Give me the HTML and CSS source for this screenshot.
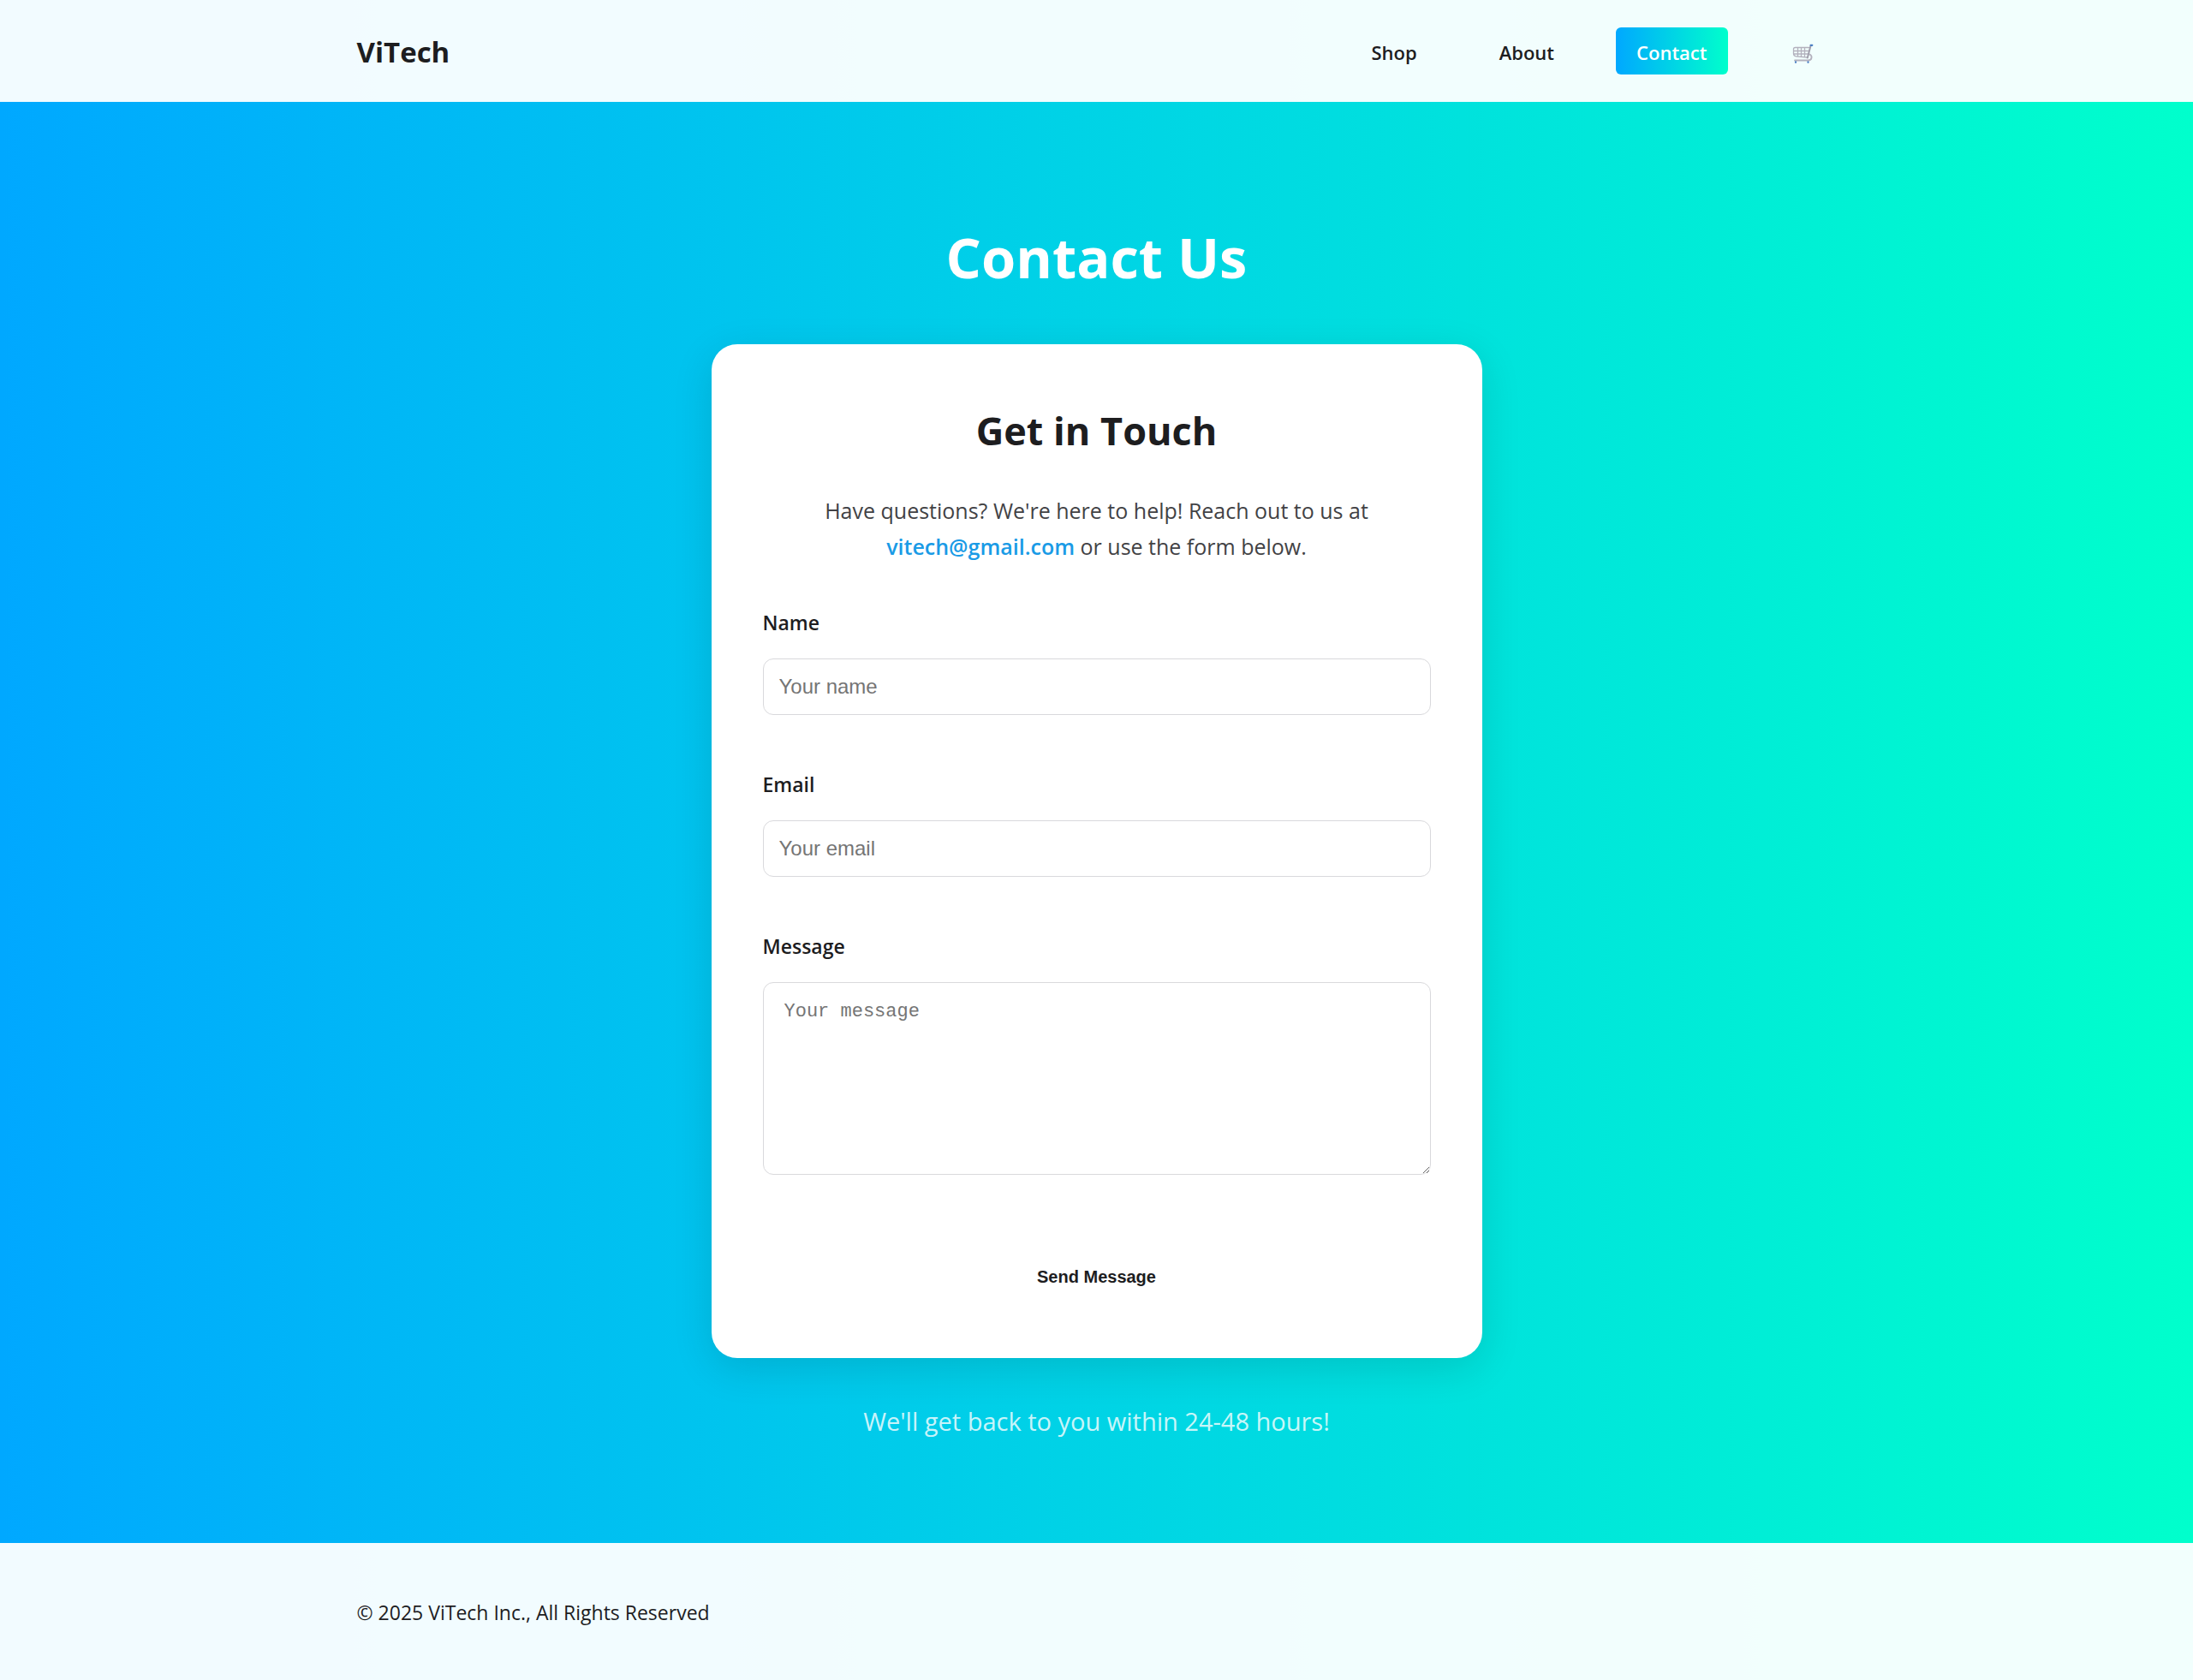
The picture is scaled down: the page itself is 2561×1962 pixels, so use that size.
FILE: index.html
```html
<!DOCTYPE html>
<html lang="en">
<head>
<meta charset="utf-8">
<meta name="viewport" content="width=device-width, initial-scale=1">
<title>Contact | ViTech</title>
<link rel="stylesheet" href="styles.css">
</head>
<body>
<header class="site-header">
  <div class="container header-inner">
    <a class="logo" href="#">ViTech</a>
    <nav class="nav">
      <a class="nav-link" href="#">Shop</a>
      <a class="nav-link" href="#">About</a>
      <a class="nav-link nav-link-active" href="#" aria-current="page">Contact</a>
      <a class="nav-link" href="#" aria-label="Cart">
        <svg class="cart-icon" viewBox="0 0 31 24" aria-hidden="true">
          <g fill="none" stroke-linecap="round" stroke-linejoin="round">
            <path d="M22.500 5.500H6.500Q4.500 5.500 4.500 7.500V12.500Q4.500 15.500 7.500 15.800L20.500 17M5 9.500H21.500M5 13H21M9.500 5.500V15.500M13.500 5.500V16M17.500 5.500V16.500" stroke="#b3b1bd" stroke-width="1.300"/>
            <path d="M24.500 3.500L20.800 17.500" stroke="#a09eac" stroke-width="2"/>
            <path d="M23.500 13.500Q26 15 25.500 17.500Q25 20.500 21.500 20.500H6" stroke="#b3b1bd" stroke-width="1.800"/>
            <path d="M24.600 2.800H26.300M7 22.300V22.800M21.500 22.300V22.800" stroke="#4c7fc4" stroke-width="2.200"/>
          </g>
        </svg>
      </a>
    </nav>
  </div>
</header>

<main class="contact">
  <h1 class="page-title">Contact Us</h1>
  <section class="card">
    <h2 class="card-title">Get in Touch</h2>
    <p class="intro">Have questions? We're here to help! Reach out to us at <a class="mail-link" href="mailto:vitech@gmail.com">vitech@gmail.com</a> or use the form below.</p>
    <form class="form">
      <div class="field">
        <label class="label" for="name">Name</label>
        <input class="control" id="name" type="text" placeholder="Your name">
      </div>
      <div class="field">
        <label class="label" for="email">Email</label>
        <input class="control" id="email" type="email" placeholder="Your email">
      </div>
      <div class="field">
        <label class="label" for="message">Message</label>
        <textarea class="control control-area" id="message" placeholder="Your message"></textarea>
      </div>
      <button class="send" type="submit">Send Message</button>
    </form>
  </section>
  <p class="note">We'll get back to you within 24-48 hours!</p>
</main>

<footer class="site-footer">
  <div class="container">
    <p class="copyright">© 2025 ViTech Inc., All Rights Reserved</p>
  </div>
</footer>
</body>
</html>
```
FILE: styles.css
```css
* {
  box-sizing: border-box;
}

body {
  margin: 0;
  min-height: 100vh;
  display: flex;
  flex-direction: column;
  background: linear-gradient(90deg, #00a8ff, #00ffcc);
  color: #1d1d1f;
  font-family: "Segoe UI", "Open Sans", "Noto Sans", sans-serif;
  font-size: 23px;
  line-height: 38px;
}

h1, h2, p {
  margin: 0;
}

a {
  color: inherit;
  text-decoration: none;
}

.container {
  width: 100%;
  max-width: 1800px;
  margin: 0 auto;
  padding: 0 36px;
}

.site-header {
  padding: 32px 0;
  background: rgba(255, 255, 255, 0.95);
}

.header-inner {
  display: flex;
  align-items: center;
  justify-content: space-between;
}

.logo {
  padding-top: 2px;
  font-size: 33px;
  font-weight: 700;
}

.nav {
  display: flex;
  gap: 48px;
}

.nav-link {
  display: flex;
  align-items: center;
  padding: 10px 24px 6px;
  border-radius: 6px;
  font-size: 22px;
  font-weight: 600;
  line-height: 39px;
}

.nav-link-active {
  background: linear-gradient(90deg, #00a8ff, #00ffcc);
  color: #fff;
}

.cart-icon {
  width: 31px;
  height: 24px;
}

.contact {
  flex: 1;
  display: flex;
  flex-direction: column;
  align-items: center;
  padding: 124px 36px 116px;
  text-align: center;
}

.page-title {
  margin-bottom: 44px;
  color: #fff;
  font-size: 65px;
  font-weight: 700;
  line-height: 115px;
}

.card {
  width: 100%;
  max-width: 900px;
  margin-bottom: 50px;
  padding: 60px;
  border-radius: 30px;
  background: #fff;
  box-shadow: 0 12px 48px rgba(0, 0, 0, 0.12);
}

.card-title {
  margin-bottom: 31px;
  font-size: 45px;
  font-weight: 700;
  line-height: 82px;
}

.intro {
  margin-bottom: 48px;
  padding: 0 60px;
  color: #424245;
  font-size: 25px;
  line-height: 42px;
}

.mail-link {
  color: #1a9be6;
  font-weight: 600;
}

.form {
  display: flex;
  flex-direction: column;
  gap: 61px;
}

.field {
  display: flex;
  flex-direction: column;
  gap: 22px;
  text-align: left;
}

.label {
  font-weight: 600;
  line-height: 40px;
}

.control {
  width: 100%;
  height: 66px;
  padding: 0 18px;
  border: 1px solid #d9d9dc;
  border-radius: 12px;
  background: #fff;
  color: #1d1d1f;
  font-family: Arial, "Liberation Sans", sans-serif;
  font-size: 24px;
}

.control::placeholder {
  color: #757575;
}

.control-area {
  height: 225px;
  padding: 19px 24px;
  font-family: Consolas, "Liberation Mono", monospace;
  font-size: 22px;
  line-height: 30px;
  resize: vertical;
}

.send {
  align-self: center;
  height: 70px;
  margin-top: 23px;
  padding: 0 36px;
  border: 0;
  border-radius: 12px;
  background: transparent;
  color: #1d1d1f;
  font-family: Arial, "Liberation Sans", sans-serif;
  font-size: 20px;
  font-weight: 700;
}

.note {
  color: rgba(255, 255, 255, 0.8);
  font-size: 29px;
  line-height: 48px;
}

.site-footer {
  padding: 62px 0 60px;
  background: rgba(255, 255, 255, 0.95);
}
```
